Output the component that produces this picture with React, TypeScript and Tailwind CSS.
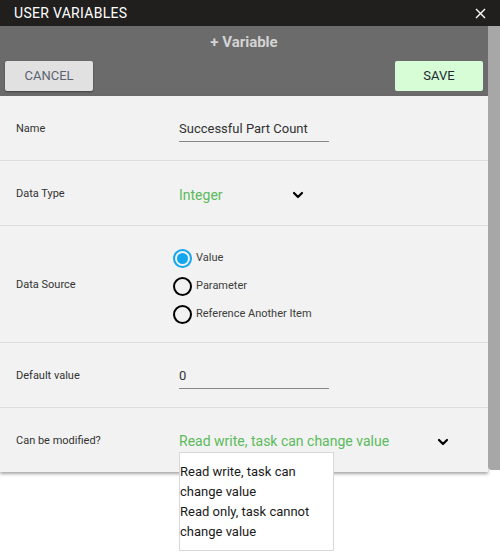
import React from 'react';

const font = { fontFamily: 'Roboto, "Noto Sans", sans-serif' };

const Chevron: React.FC = () => (
  <svg width="12" height="8" viewBox="0 0 12 8" className="text-black">
    <path d="M2 2 L6 6 L10 2" fill="none" stroke="currentColor" strokeWidth="2.2" strokeLinecap="round" strokeLinejoin="round" />
  </svg>
);

const Radio: React.FC<{ checked?: boolean; label: string }> = ({ checked, label }) => (
  <div className="flex items-center h-[28px]">
    {checked ? (
      <span className="w-[19px] h-[19px] rounded-full border-2 border-[#14a6ee] flex items-center justify-center">
        <span className="w-[11px] h-[11px] rounded-full bg-[#14a6ee]" />
      </span>
    ) : (
      <span className="w-[19px] h-[19px] rounded-full border-2 border-black" />
    )}
    <span className="ml-[4px] text-[11px] text-[#3d3d3d]">{label}</span>
  </div>
);

const Row: React.FC<{ label: string; h: string; children: React.ReactNode; last?: boolean }> = ({ label, h, children, last }) => (
  <div className={`flex items-center ${h} ${last ? '' : 'border-b border-[#dcdddc]'}`}>
    <div className="w-[179px] pl-[16px] pt-[2px] text-[11px] text-[#333]">{label}</div>
    <div className="flex-1">{children}</div>
  </div>
);

const App: React.FC = () => {
  return (
    <div className="w-[500px] h-[555px] bg-white relative overflow-hidden" style={font}>
      <div className="h-[26px] bg-[#201f1d] flex items-center justify-between px-[14px]">
        <span className="text-white text-[14px] tracking-[0.3px]">USER VARIABLES</span>
        <svg width="11" height="11" viewBox="0 0 11 11">
          <path d="M1 1 L10 10 M10 1 L1 10" stroke="white" strokeWidth="1.4" />
        </svg>
      </div>
      <div className="flex">
        <div className="w-[488px]">
          <div className="h-[70px] bg-[#6b6b6b] px-[5px] pt-[7px]">
            <div className="text-center text-[15px] font-bold text-[#d3d3d3] leading-[18px]">+ Variable</div>
            <div className="flex justify-between mt-[10px]">
              <button className="w-[88px] h-[30px] bg-[#e1e1e1] rounded-[2px] shadow-[0_1px_2px_rgba(0,0,0,0.4)] text-[13px] text-[#5a6270]">CANCEL</button>
              <button className="w-[88px] h-[30px] bg-[#d6fdd6] rounded-[2px] text-[13px] text-[#1d2935]">SAVE</button>
            </div>
          </div>
          <div className="bg-[#f1f2f1] shadow-[0_2px_3px_rgba(0,0,0,0.35)]">
            <Row label="Name" h="h-[65px]">
              <div className="w-[150px] border-b border-[#888] pb-[3px] text-[13px] text-[#333] leading-[18px] mt-[6px]">Successful Part Count</div>
            </Row>
            <Row label="Data Type" h="h-[65px]">
              <div className="flex items-center w-[125px] justify-between mt-[4px]">
                <span className="text-[14px] text-[#5cba5c]">Integer</span>
                <Chevron />
              </div>
            </Row>
            <Row label="Data Source" h="h-[117px]">
              <div className="-ml-[6px] mt-[5px]">
                <Radio checked label="Value" />
                <Radio label="Parameter" />
                <Radio label="Reference Another Item" />
              </div>
            </Row>
            <Row label="Default value" h="h-[65px]">
              <div className="w-[150px] border-b border-[#888] pb-[3px] text-[13px] text-[#333] leading-[18px] mt-[6px]">0</div>
            </Row>
            <Row label="Can be modified?" h="h-[64px]" last>
              <div className="flex items-center w-[270px] justify-between mt-[3px]">
                <span className="text-[14px] text-[#5cba5c]">Read write, task can change value</span>
                <Chevron />
              </div>
            </Row>
          </div>
        </div>
        <div className="w-[12px] bg-[#a7a7a7] h-[444px] rounded-bl-[4px]" />
      </div>
      <div className="absolute left-[179px] top-[452px] w-[155px] bg-white border border-[#d8d8d8] pt-[9px] pb-[8px] text-[13px] leading-[20px] text-[#1a1a1a]">
        <div>Read write, task can change value</div>
        <div>Read only, task cannot change value</div>
      </div>
    </div>
  );
};

export default App;
